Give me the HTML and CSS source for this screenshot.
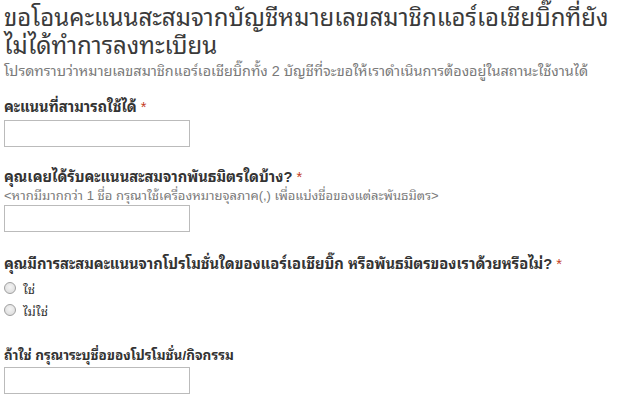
FILE: index.html
```html
<!DOCTYPE html>
<html lang="th">
<head>
<meta charset="utf-8">
<title>Form</title>
<link rel="stylesheet" href="styles.css">
</head>
<body>
<div class="form">
  <header class="form-head">
    <h1 class="form-title">ขอโอนคะแนนสะสมจากบัญชีหมายเลขสมาชิกแอร์เอเชียบิ๊กที่ยัง<br>ไม่ได้ทำการลงทะเบียน</h1>
    <p class="form-desc">โปรดทราบว่าหมายเลขสมาชิกแอร์เอเชียบิ๊กทั้ง 2 บัญชีที่จะขอให้เราดำเนินการต้องอยู่ในสถานะใช้งานได้</p>
  </header>

  <div class="item item-1">
    <label class="q-title">คะแนนที่สามารถใช้ได้ <span class="req">*</span></label>
    <input class="text-input" type="text">
  </div>

  <div class="item item-2">
    <label class="q-title">คุณเคยได้รับคะแนนสะสมจากพันธมิตรใดบ้าง? <span class="req">*</span></label>
    <div class="q-help">&lt;หากมีมากกว่า 1 ชื่อ กรุณาใช้เครื่องหมายจุลภาค(,) เพื่อแบ่งชื่อของแต่ละพันธมิตร&gt;</div>
    <input class="text-input" type="text">
  </div>

  <div class="item item-3">
    <label class="q-title">คุณมีการสะสมคะแนนจากโปรโมชั่นใดของแอร์เอเชียบิ๊ก หรือพันธมิตรของเราด้วยหรือไม่? <span class="req">*</span></label>
    <ul class="choices">
      <li class="choice"><span class="radio"></span><span class="choice-label">ใช่</span></li>
      <li class="choice"><span class="radio"></span><span class="choice-label">ไม่ใช่</span></li>
    </ul>
  </div>

  <div class="item item-4">
    <label class="q-title q-title-short">ถ้าใช่ กรุณาระบุชื่อของโปรโมชั่น/กิจกรรม</label>
    <input class="text-input" type="text">
  </div>
</div>
</body>
</html>
```

FILE: styles.css
```css
html, body {
  margin: 0;
  padding: 0;
  background: #ffffff;
}
body {
  font-family: "Liberation Sans", "Noto Sans Thai Looped", "Noto Sans Thai", sans-serif;
  color: #333333;
}
.form {
  padding: 4px 4px 0 4px;
}
.form-title {
  margin: 0;
  font-size: 24px;
  font-weight: normal;
  line-height: 28px;
  color: #3a3a3a;
}
.form-desc {
  margin: 2px 0 0 0;
  font-size: 14.4px;
  line-height: 18px;
  color: #7a7a7a;
}
.item {
  display: flex;
  flex-direction: column;
  align-items: flex-start;
}
.item-1 { margin-top: 17px; }
.item-2 { margin-top: 20px; }
.item-3 { margin-top: 22px; }
.item-4 { margin-top: 25px; }
.q-title {
  font-size: 14.7px;
  font-weight: bold;
  line-height: 20px;
  color: #333333;
  margin-bottom: 3px;
}
.q-title-short {
  font-size: 13.5px;
  margin-bottom: 1px;
}
.req {
  color: #c43b1d;
  font-weight: normal;
}
.q-help {
  font-size: 13px;
  line-height: 16px;
  color: #7a7a7a;
  margin-top: -2px;
  margin-bottom: 1px;
}
.text-input {
  box-sizing: border-box;
  width: 186px;
  height: 27px;
  margin: 0;
  border: 1px solid #bbbbbb;
  background: #ffffff;
  padding: 2px 4px;
  font: inherit;
}
.choices {
  list-style: none;
  margin: 0;
  padding: 0;
}
.choice {
  display: flex;
  align-items: center;
  gap: 7px;
  height: 22px;
  font-size: 13px;
  color: #333333;
}
.radio {
  box-sizing: border-box;
  width: 12px;
  height: 12px;
  border-radius: 50%;
  border: 1px solid #a0a0a0;
  background: radial-gradient(circle at 50% 40%, #f4f4f4, #d8d8d8);
}
```
